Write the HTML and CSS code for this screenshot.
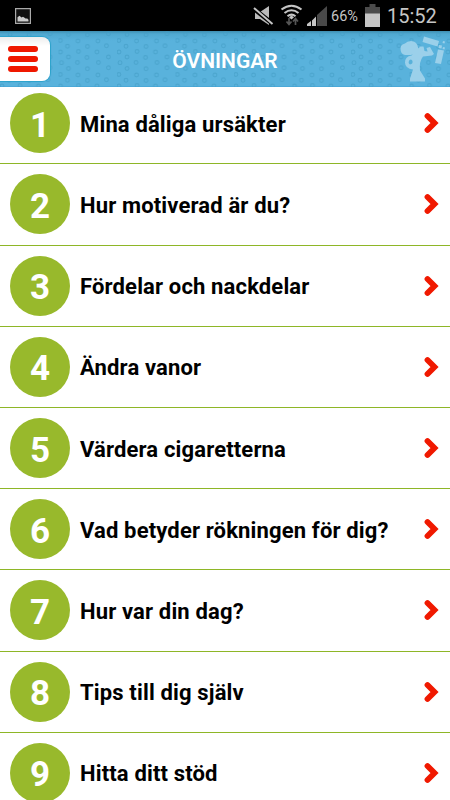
FILE: index.html
```html
<!DOCTYPE html>
<html lang="sv">
<head>
<meta charset="utf-8">
<title>Övningar</title>
<link rel="stylesheet" href="styles.css">
</head>
<body>
<div class="status">
  <svg class="photo" width="16" height="16" viewBox="0 0 16 16"><path d="M.6.6h14.8v14.8H.6z" fill="#111" stroke="#aaa" stroke-width="1.2"/><path d="M2.500 13.500V9.200l2-1.400 2 1.700 1.500-.8 3 2 1-.5 1.500 1.500v1.800z" fill="#ccc"/></svg>
  <div class="tray">
    <svg width="114" height="31" viewBox="252 0 114 31">
      <path d="M255 12h5l9-6v19l-9-6h-5z" fill="#bbb"/><path d="M254 9l19 15" stroke="#000" stroke-width="4.5"/><path d="M254 8l18.500 16" stroke="#c5c5c5" stroke-width="2"/>
      <g fill="none" stroke="#c5c5c5" stroke-width="2.100"><path d="M281.500 9.500Q291.500 2 301.500 9.500M284.500 13Q291.500 7.500 298.500 13M287.500 16.200Q291.500 13 295.500 16.200"/></g>
      <path d="M289 17.200l2.500-1.700 2.500 1.700-2.500 2.300z" fill="#c5c5c5"/>
      <path d="M289 18v6m-2.500-2.500l2.500 3 2.500-3M295.500 25v-6m-2.500 2.500l2.500-3 2.500 3" fill="none" stroke="#555" stroke-width="1.700"/>
      <path d="M317 15l10-9v20h-10z" fill="#494949"/><path d="M307 26v-2l4-3v5zm5 0v-5.500l4-4V26z" fill="#c5c5c5"/>
    </svg>
    <span class="percent">66%</span>
    <svg class="battery" width="15" height="23" viewBox="0 0 15 23"><path d="M0 3h4.500V0h6v3H15v20H0z" fill="#4b4b4b"/><path d="M0 9.500h15V23H0z" fill="#c5c5c5"/></svg>
    <span class="clock">15:52</span>
  </div>
</div>
<header class="header">
  <svg class="texture" width="450" height="56">
    <defs><pattern id="dots" width="58.500" height="34" patternUnits="userSpaceOnUse"><g fill="none" stroke="#429dc4" stroke-opacity=".6" stroke-width="1.100"><circle cx="10" cy="3.500" r="1.900"/><circle cx="29" cy="3.800" r="1.900"/><circle cx="50" cy="2.800" r="1.900"/><circle cx="1.900" cy="9.500" r="1.900"/><circle cx="19.500" cy="10" r="1.900"/><circle cx="39.500" cy="10" r="1.900"/><circle cx="9" cy="15.300" r="1.900"/><circle cx="29" cy="15.500" r="1.900"/><circle cx="48" cy="14.800" r="1.900"/><circle cx="2" cy="21" r="1.900"/><circle cx="20" cy="20.500" r="1.900"/><circle cx="38.500" cy="21" r="1.900"/><circle cx="10" cy="26" r="1.900"/><circle cx="28.500" cy="26.500" r="1.900"/><circle cx="50" cy="26" r="1.900"/><circle cx="3" cy="31.700" r="1.900"/><circle cx="19" cy="31.500" r="1.900"/><circle cx="40" cy="31.500" r="1.900"/></g></pattern></defs>
    <rect width="450" height="56" fill="url(#dots)"/>
  </svg>
  <div class="menu"><i></i><i></i><i></i></div>
  <h1>ÖVNINGAR</h1>
  <svg class="logo" width="48" height="48" viewBox="400 35 48 48" fill="#9bd0ea">
    <path d="M400.500 48.500q0-4 4.500-5 2-2.500 6-2.500 6 0 7 6.500l1 1 .5-2h4l1 4.500 3 .5-1-3.500 3.500-1 4 7-2 1.500-9 1q-4 5-3 14l5 8v3h-15v-3l3-9q-8-1-8-7 0-6 6.500-7l1.500-1.300q-1 1-3 .800h-5q-4.500-1-4.500-6.500z"/>
    <path d="M409.500 60q-2 3 .500 4.500 3-.500 2.500-3.500-1-2.500-3-1z" fill="#59b1da"/>
    <path d="M424 36.500l15 4.500-1.500 5.500-15-4.500zM438 49.500l6 1-3 13.500-6-1zM439 45l3 .5-.5 3-3-.5zM443 41l2 .5-.5 2-2-.5zM443 47l2 .5-.5 2-2-.5z"/>
  </svg>
</header>
<ul class="list" id="list"></ul>
<script src="app.js"></script>
</body>
</html>
```
FILE: styles.css
```css
* { box-sizing: border-box; }
body { margin: 0; height: 800px; overflow: hidden; background: #fff; font-family: Roboto, sans-serif; }
svg { display: block; flex: none; }
.status { height: 31px; background: #000; display: flex; justify-content: space-between; padding-left: 15px; }
.photo { margin-top: 8px; }
.tray { display: flex; color: #c5c5c5; width: 198px; }
.percent { font-size: 14.500px; line-height: 33px; width: 28px; margin-left: -35px; white-space: nowrap; }
.battery { margin: 4px 0 0 6px; }
.clock { font-size: 20px; line-height: 32px; margin-left: 7px; }
.header { height: 56px; position: relative; z-index: 1; display: flex; align-items: flex-start; background: linear-gradient(#3e8eb1, #50a9d1 3px, #59b2dc 10px, #59b2dc); border-bottom: 1px solid #4ba9d8; }
.texture { position: absolute; top: 0; left: 0; }
.menu { position: relative; width: 50px; height: 44px; margin-top: 6px; padding: 9px 12px 0 8px; border-radius: 0 8px 8px 0; background: linear-gradient(#ededed, #fff 9px); box-shadow: 0 0 1px 1px #2ba2cb; }
.menu i { display: block; height: 6px; margin-bottom: 4px; border-radius: 3px; background: #ef1800; }
.header h1 { position: relative; flex: 1; margin: 0; text-align: center; color: #fff; font-size: 21px; font-weight: 600; line-height: 60px; }
.logo { position: relative; margin: 4px 2px 0 0; }
.list { list-style: none; margin: -3.800px 0 0; padding: 0; }
.row { height: 81.200px; display: flex; align-items: center; padding: 0 10px; border-bottom: 1px solid #8eb627; }
.number { width: 60px; height: 60px; border-radius: 50%; background: #98b92c; color: #fff; display: flex; align-items: center; justify-content: center; font: bold 35px/60px Roboto, sans-serif; padding-top: 5px; }
.label { flex: 1; padding: 2px 0 0 10px; font-size: 22px; font-weight: 700; letter-spacing: .150px; color: #000; white-space: nowrap; }
.chevron { margin-right: 1px; }
```
FILE: app.js
```js
const titles = ["Mina dåliga ursäkter", "Hur motiverad är du?", "Fördelar och nackdelar", "Ändra vanor", "Värdera cigaretterna", "Vad betyder rökningen för dig?", "Hur var din dag?", "Tips till dig själv", "Hitta ditt stöd"];
document.getElementById("list").innerHTML = titles.map((title, i) => `<li class="row"><span class="number">${i + 1}</span><span class="label">${title}</span><svg class="chevron" width="15" height="22" viewBox="0 0 15 22"><path d="M3.500 4L10.500 11 3.500 18" fill="none" stroke="#f01900" stroke-width="5.800" stroke-linecap="round"/></svg></li>`).join("");
```
